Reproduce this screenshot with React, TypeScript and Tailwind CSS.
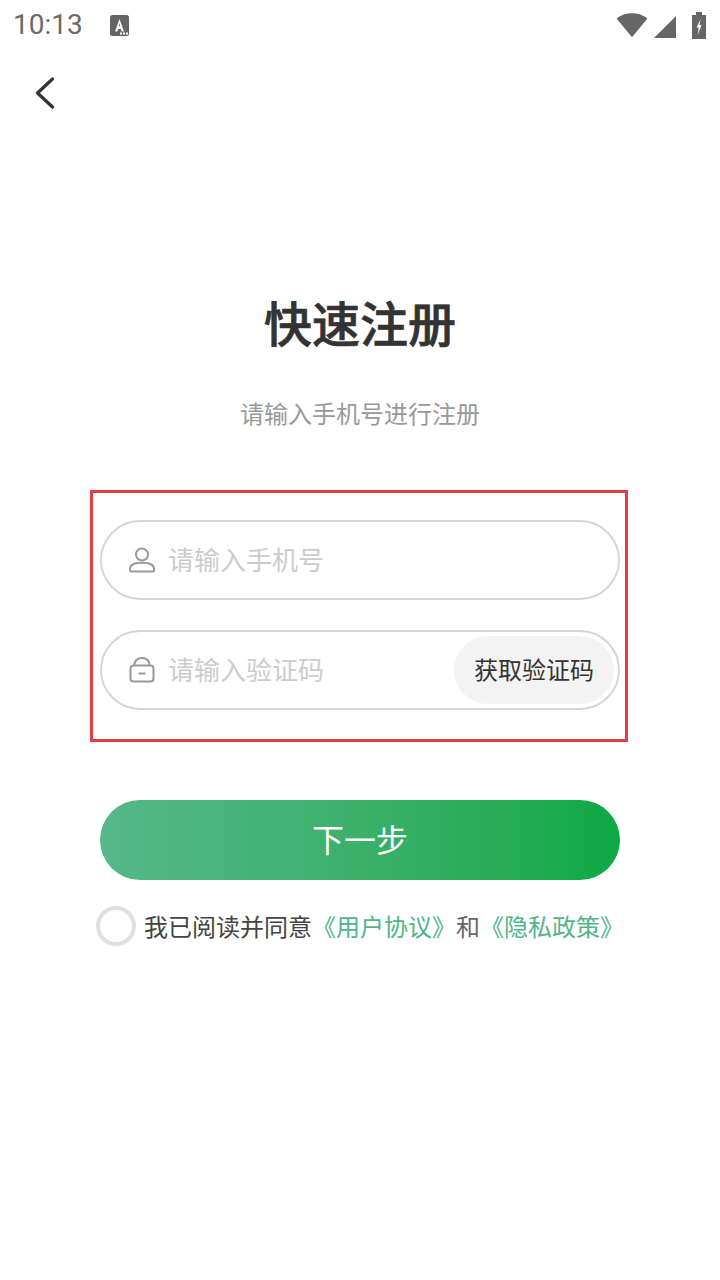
const cjk = "font-['Noto_Sans_CJK_SC','Noto_Sans',sans-serif]";

function StatusBar() {
  return (
    <div className="h-[50px] pl-[13px] pr-[14px] flex items-center justify-between">
      <div className="flex items-center">
        <span className="w-[97px] font-['Roboto',sans-serif] text-[28px] leading-[50px] text-[#6b6b6b]">10:13</span>
        <svg width="19" height="21" viewBox="0 0 19 21">
          <rect x="0" y="0" width="19" height="21" rx="2.5" fill="#666" />
          <path d="M9.5 4 L14 16.5 H11.6 L10.8 14 H8.2 L7.4 16.5 H5 Z" fill="#fff" />
          <path d="M9.5 8 L8.8 11.2 H10.2 Z" fill="#666" />
          <rect x="10" y="17.5" width="2" height="2" fill="#fff" />
          <rect x="13" y="17.5" width="2" height="2" fill="#fff" />
          <rect x="16" y="17.5" width="2" height="2" fill="#fff" />
        </svg>
      </div>
      <div className="flex items-center gap-[6px]">
        <svg width="32" height="26" viewBox="0 0 32 26">
          <path d="M0.5 6.5 C9 -0.5 23 -0.5 31.5 6.5 L17 24 Q16 25 15 24 Z" fill="#666" />
        </svg>
        <svg width="22" height="22" viewBox="0 0 22 22" className="mt-[3px]">
          <path d="M22 0 V22 H0 Z" fill="#666" />
        </svg>
        <svg className="ml-[10px]" width="14" height="27" viewBox="0 0 14 27">
          <path d="M4 0 H10 V3 H14 V27 H0 V3 H4 Z" fill="#666" />
          <path d="M8.6 7 L4.6 15.5 H6.8 L5.6 23 L9.6 13 H7.4 Z" fill="#fff" />
        </svg>
      </div>
    </div>
  );
}

function BackIcon() {
  return (
    <svg width="20" height="32" viewBox="0 0 20 32" fill="none" stroke="#333" strokeWidth="3.2" strokeLinecap="round" strokeLinejoin="round">
      <path d="M17.5 2 L2.5 16 L17.5 30" />
    </svg>
  );
}

function UserIcon() {
  return (
    <svg width="26" height="26" viewBox="0 0 26 26" fill="none" stroke="#9a9a9a" strokeWidth="2">
      <circle cx="13" cy="7.5" r="6" />
      <path d="M1 22 C1 17.5 7 15.8 13 15.8 C19 15.8 25 17.5 25 22 V23.5 Q25 24.6 24 24.6 H2 Q1 24.6 1 23.5 Z" />
    </svg>
  );
}

function LockIcon() {
  return (
    <svg width="26" height="26" viewBox="0 0 26 26" fill="none" stroke="#9a9a9a" strokeWidth="2">
      <rect x="1.5" y="8.5" width="23" height="16" rx="3" />
      <path d="M5.5 8.5 C5.5 3.5 8.5 1 13 1 C17.5 1 20.5 3.5 20.5 8.5" />
      <path d="M9.5 16.5 H16.5" />
    </svg>
  );
}

export default function App() {
  return (
    <div className={`w-[720px] h-[1280px] bg-white overflow-hidden ${cjk}`}>
      <StatusBar />

      {/* Back */}
      <div className="h-[86px] pl-[35px] pt-[27px]">
        <BackIcon />
      </div>

      {/* Heading */}
      <h1 className="mt-[149px] text-center text-[48px] leading-[72px] font-medium text-[#333] [-webkit-text-stroke:0.7px_#333]">快速注册</h1>
      <p className="mt-[38px] text-center text-[24px] leading-[36px] text-[#999]">请输入手机号进行注册</p>

      {/* Form */}
      <div className="mt-[59px] ml-[90px] w-[538px] h-[252px] border-[3px] border-[#e53e42] pt-[27px] pl-[7px] flex flex-col gap-[30px]">
        <div className="w-[520px] h-[80px] rounded-full border-2 border-[#d6d6d6] pl-[27px] flex items-center gap-[13px]">
          <UserIcon />
          <span className="text-[26px] text-[#cccccc] pb-[4px]">请输入手机号</span>
        </div>
        <div className="w-[520px] h-[80px] rounded-full border-2 border-[#d6d6d6] pl-[27px] pr-[4px] flex items-center gap-[13px]">
          <LockIcon />
          <span className="text-[26px] text-[#cccccc] pb-[4px]">请输入验证码</span>
          <button className="ml-auto w-[160px] h-[68px] rounded-full bg-[#f3f3f3] text-[24px] text-[#333] pb-[2px]">获取验证码</button>
        </div>
      </div>

      {/* Next */}
      <button className="block mt-[58px] ml-[100px] w-[520px] h-[80px] rounded-full bg-gradient-to-r from-[#55b88a] to-[#0ca845] text-white text-[32px] pb-[4px]">下一步</button>

      {/* Agreement */}
      <div className="mt-[26px] ml-[96px] flex items-center gap-[8px] text-[24px] leading-[40px] whitespace-nowrap">
        <span className="w-[40px] h-[40px] rounded-full border-[4px] border-[#e0e0e0]" />
        <span className="text-[#444]">我已阅读并同意</span>
        <span className="-ml-[8px] text-[#4fb587]">《用户协议》</span>
        <span className="-ml-[8px] text-[#666]">和</span>
        <span className="-ml-[8px] text-[#4fb587]">《隐私政策》</span>
      </div>
    </div>
  );
}
